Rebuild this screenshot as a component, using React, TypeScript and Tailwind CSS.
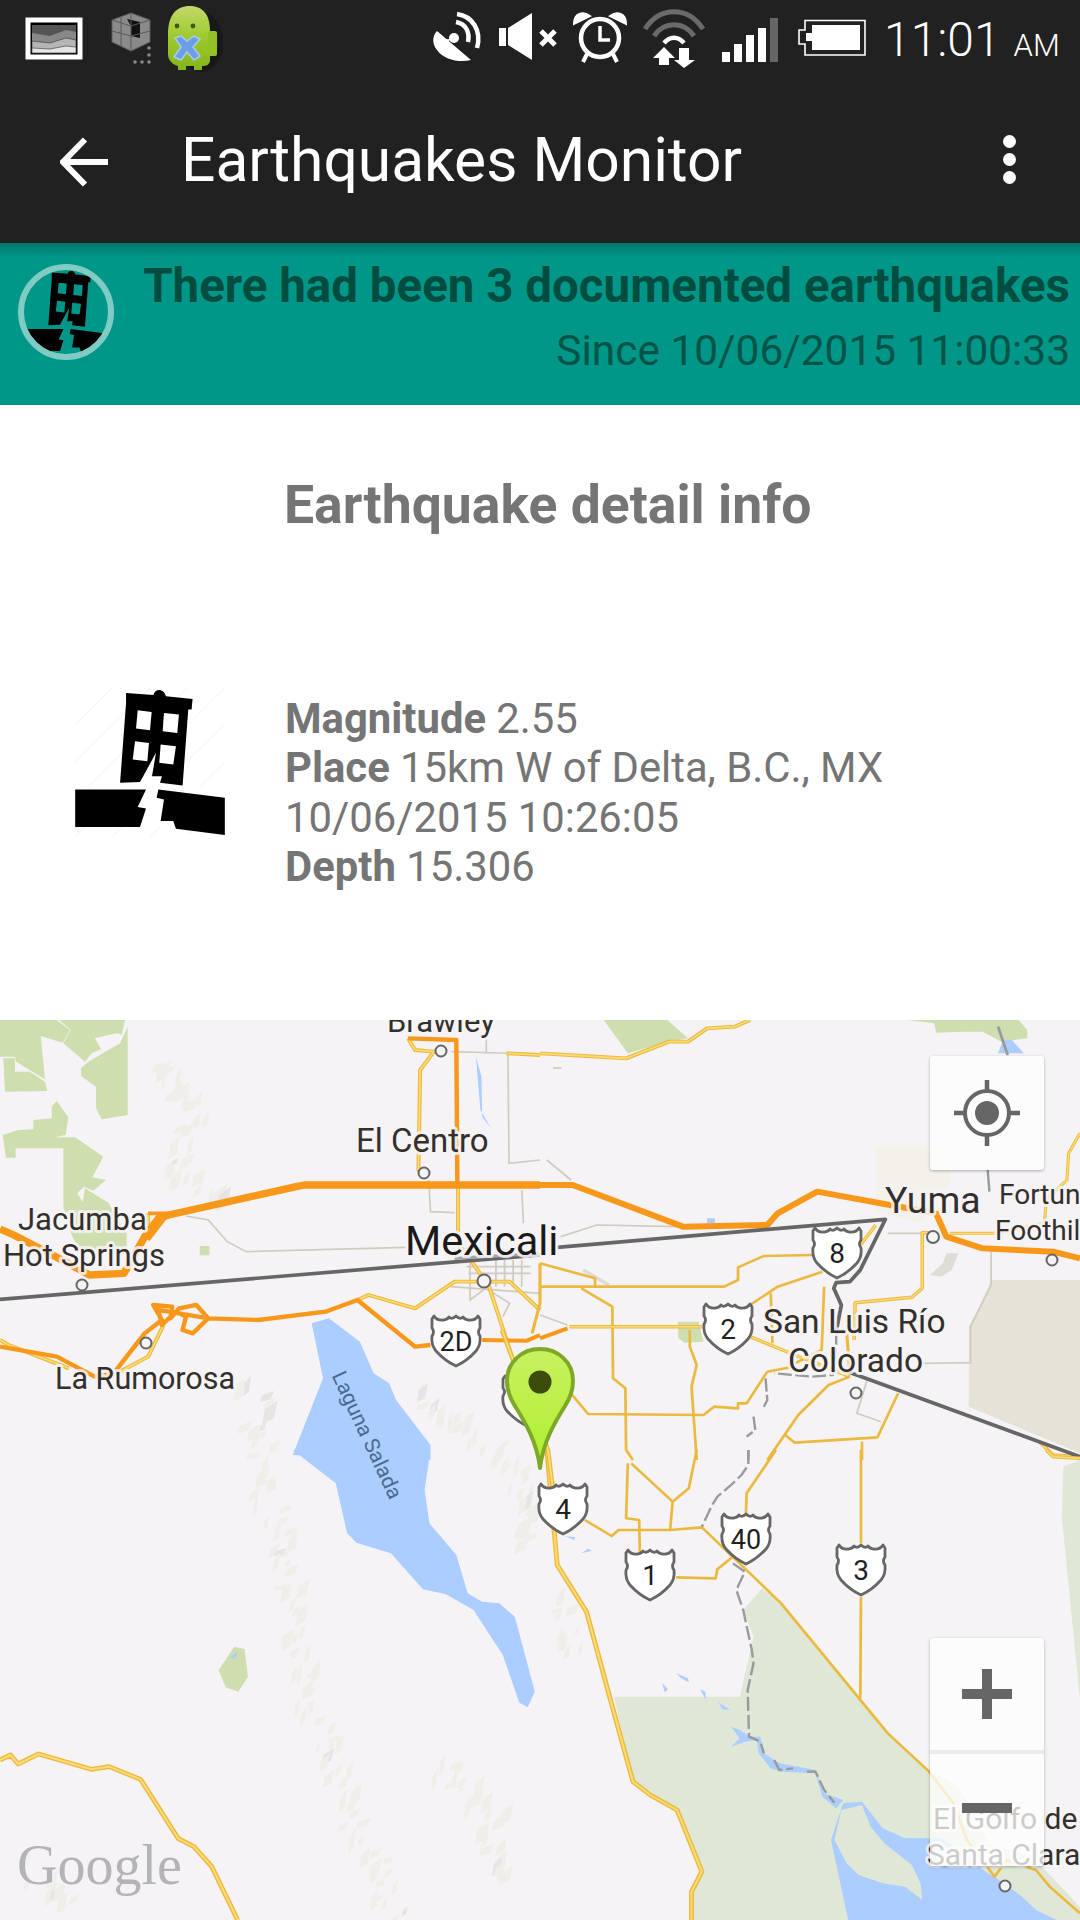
import React from "react";

const Z4 = "translate(0 1010) scale(0.34439 0.33333)";
const Z5 = "translate(540 1010) scale(0.34439 0.33333)";
const Z6 = "translate(0 1450) scale(0.34439 0.33333)";
const Z7 = "translate(540 1450) scale(0.34439 0.33333)";

const BG = "#f6f3f7";
const GREEN = "#cfdeae";
const PALE = "#dfe7d6";
const WATER = "#abcdff";
const Y_OUT = "#ecb93f";
const Y_IN = "#fbdc74";
const ORANGE = "#f8981a";
const BORDER = "#666666";
const BEIGE = "#cfccbf";

function shards() {
  const ridges: number[][][] = [
    [[248, 1377], [262, 1483], [293, 1600], [310, 1717], [344, 1800], [379, 1883], [395, 1920]],
    [[434, 1760], [489, 1817], [489, 1883]],
    [[413, 1393], [516, 1460], [523, 1550]],
    [[556, 1600], [570, 1660]],
    [[150, 1060], [190, 1110], [170, 1180], [230, 1200]],
    [[30, 1870], [60, 1910]],
  ];
  let s = 12345;
  const r = () => {
    s = (s * 16807) % 2147483647;
    return s / 2147483647;
  };
  const out: { d: string; f: string }[] = [];
  ridges.forEach((pts) => {
    for (let i = 0; i < pts.length - 1; i++) {
      const [a, b] = pts[i];
      const [c, d] = pts[i + 1];
      const n = Math.ceil(Math.hypot(c - a, d - b) / 6);
      for (let k = 0; k < n; k++) {
        const t = k / n;
        const x = a + (c - a) * t + (r() - 0.5) * 30;
        const y = b + (d - b) * t + (r() - 0.5) * 18;
        const w = 4 + r() * 9;
        const h = 5 + r() * 14;
        const f = r() > 0.93 ? "#e6e5e3" : "#f0eee9";
        out.push({
          d: `M${x.toFixed(1)} ${y.toFixed(1)}l${w.toFixed(1)} ${(-h * 0.5).toFixed(1)}l${(-w * 0.3).toFixed(1)} ${h.toFixed(1)}l${(-w * 0.9).toFixed(1)} ${(h * 0.3).toFixed(1)}z`,
          f,
        });
      }
    }
  });
  return out;
}

function Road({ p, w = 4.5, inner = false }: { p: string; w?: number; inner?: boolean }) {
  const sw = w * 1.3;
  return (
    <>
      <polyline points={p} fill="none" stroke={Y_OUT} strokeWidth={sw} strokeLinejoin="round" />
      {inner && <polyline points={p} fill="none" stroke={Y_IN} strokeWidth={sw * 0.42} strokeLinejoin="round" />}
    </>
  );
}

function Shield({ x, y, t }: { x: number; y: number; t?: string }) {
  return (
    <g transform={`translate(${x} ${y})`}>
      <path
        d="M-22 1Q-19 6-12 5Q-8 4-7 2Q-4 5 0 1Q4 5 7 2Q8 4 12 5Q19 6 22 1L24 4L24 13Q21 17 24 21Q25 30 20 36Q11 46 0 51Q-11 46-20 36Q-25 30-24 21Q-21 17-24 13L-24 4Z"
        fill="#ffffff"
        stroke="#666666"
        strokeWidth="2.8"
        strokeLinejoin="round"
      />
      {t && (
        <text x="0" y="36" textAnchor="middle" fontSize={t.length > 1 ? 27 : 28} fill="#1f1f1f">
          {t}
        </text>
      )}
    </g>
  );
}

function Label({ x, y, s = 30, t, c = "#33302b" }: { x: number; y: number; s?: number; t: string; c?: string }) {
  return (
    <text x={x} y={y} fontSize={s} fill={c} stroke={BG} strokeOpacity="0.85" strokeWidth="6" strokeLinejoin="round" paintOrder="stroke">
      {t}
    </text>
  );
}

function Dot({ x, y, r = 5.5 }: { x: number; y: number; r?: number }) {
  return <circle cx={x} cy={y} r={r} fill="#f4f4f4" stroke="#666666" strokeWidth="2" />;
}

function Quake({ fill = "#000000" }: { fill?: string }) {
  return (
    <g fill={fill}>
      <path
        fillRule="evenodd"
        d="M258 100L340 106C345 85 372 85 378 110L458 118L455 150L445 150L428 378L360 370L366 350L336 350L348 280L300 368L240 370L258 130ZM293 152L335 157L330 212L288 207ZM372 160L417 165L412 220L368 215ZM285 245L327 250L322 305L278 300ZM362 255L408 260L400 315L358 310Z"
      />
      <path d="M105 390L318 390L293 443L318 447L300 503L105 503Z" />
      <path d="M355 390L555 415L555 527L408 508L400 485L362 485L372 420L350 415Z" />
    </g>
  );
}

function MapArt() {
  return (
    <svg viewBox="0 1020 1080 900" className="block w-[1080px] h-[900px]" style={{ fontFamily: "Roboto, sans-serif" }}>
      <rect x="0" y="1020" width="1080" height="900" fill={BG} />
      <g transform="translate(0 1020) scale(0.33333)" fill={GREEN}>
        <polygon points="0,0 170,0 210,30 188,68 122,48 135,178 48,125 45,110 0,110" />
        <polygon points="10,115 45,115 45,155 90,155 135,185 142,213 15,215" />
        <polygon points="178,0 375,0 365,45 355,40 340,42 285,55 303,88 275,100 255,125 190,70 212,30" />
        <polygon points="383,20 383,285 305,298 288,265 288,200 243,168 243,145 265,125 360,70" />
        <polygon points="170,243 205,292 197,345 165,352 225,352 310,410 277,472 318,480 280,512 252,500 232,520 248,545 255,505 325,548 380,640 380,680 240,700 213,640 190,560 190,385 47,385 47,413 18,413 8,345 55,330 100,328 100,300 155,295 155,260" />
      </g>
      <g transform={Z4} fill={GREEN}>
        <rect x="580" y="708" width="28" height="28" />
      </g>
      <g transform={Z5}>
        <polygon points="185,30 370,30 430,85 370,95 255,130" fill={GREEN} />
        <polygon points="1065,30 1390,30 1415,60 1415,85 1340,95 1285,65 1230,65 1150,68 1145,40" fill={GREEN} />
        <polygon points="400,935 460,935 475,995 420,998 402,985" fill={GREEN} />
        <polygon points="975,410 1190,410 1190,520 1100,640 975,600" fill="#f3f1ea" />
        <polygon points="1310,810 1568,810 1568,1330 1245,1190 1245,950 1280,880" fill="#e5e3d7" />
        <polygon points="1215,730 1195,780 1165,800 1132,795 1170,760 1180,730" fill="#deddd6" />
        <polygon points="485,625 508,625 508,640 485,640" fill={WATER} />
        <polygon points="1330,130 1345,90 1370,90 1405,130" fill={WATER} />
      </g>
      <g transform={Z7}>
        <polygon points="1520,50 1568,30 1568,750 1515,200" fill={PALE} />
        <polygon
          points="215,740 580,740 620,560 590,480 645,415 700,460 1010,850 1130,960 1200,1000 1250,1060 1300,1180 1430,1220 1568,1370 1568,1410 440,1410 440,1325 475,1265 398,1080 270,995"
          fill={PALE}
        />
        <polygon points="845,1170 880,1060 935,1055 995,1135 1060,1165 1165,1165 1300,1270 1320,1280 1400,1340 1440,1380 1500,1410 895,1410" fill={WATER} />
        <polygon points="875,1080 855,1170 890,1240 925,1275 995,1300 1060,1310 1110,1350 1105,1300 1080,1245 1000,1180 960,1130 935,1065" fill={PALE} />
        <polygon points="555,830 580,840 610,860 640,860 650,910 695,940 800,960 825,1030 880,1050 860,1075 820,1040 800,970 700,965 670,955 635,910 630,870 595,875 555,890 580,865" fill={WATER} />
        <polygon points="395,670 430,685 432,697 410,685" fill={WATER} />
        <polygon points="355,700 372,718 362,727" fill={WATER} />
        <polygon points="465,718 480,725 482,750" fill={WATER} />
        <polygon points="518,757 552,780 530,778" fill={WATER} />
        <polygon points="72,258 102,262 100,270" fill={WATER} />
        <polygon points="120,310 140,296 150,302" fill={WATER} />
      </g>
      {shards().map((s, i) => (
        <path key={i} d={s.d} fill={s.f} />
      ))}
      <g transform={Z4} fill={WATER}>
        <polygon points="905,940 955,925 1045,995 1085,1090 1130,1120 1150,1170 1250,1305 1250,1350 850,1335 938,1105" />
        <polygon points="1382,140 1398,200 1400,320 1425,355 1395,300" />
      </g>
      <g transform={Z6}>
        <polygon
          points="850,0 1250,0 1233,120 1247,220 1325,315 1358,430 1400,455 1450,460 1495,500 1553,725 1532,772 1508,758 1460,615 1375,480 1295,433 1228,418 1135,310 1035,278 1008,250 975,100"
          fill={WATER}
        />
        <polygon points="680,590 710,597 720,680 692,725 655,712 635,660" fill={GREEN} />
        <polygon points="665,625 690,605 685,625" fill={WATER} />
      </g>

      <g transform={Z4} fill="none" stroke={BEIGE} strokeWidth="5">
        <path d="M540 618L605 630L660 695L715 725L1180 712" />
        <path d="M1310 125L1568 132" />
        <path d="M1412 80V130" />
        <path d="M1475 130L1478 460L1568 450" />
        <path d="M1245 510L1250 605L1320 608" />
        <path d="M1515 540L1520 640" />
        <path d="M1355 770H1540M1360 790H1540" />
        <path d="M1365 760V870L1410 835L1480 880L1460 920" />
        <path d="M1440 750V830M1465 750V830M1490 750V830M1515 750V830" />
        <path d="M1310 830L1568 850" />
      </g>
      <g transform={Z5} fill="none" stroke={BEIGE} strokeWidth="5">
        <path d="M20 450L90 510" />
        <path d="M60 680L165 645L400 650" />
        <path d="M1010 670H1120" />
        <path d="M1310 720V825L1250 950V1058L1110 1060" />
        <path d="M950 1110L920 1210L990 1235" />
        <path d="M0 915L80 945" />
        <path d="M125 780L200 825" strokeWidth="11" stroke="#dedcd4" />
        <path d="M38 174H62" />
      </g>

      <g transform={Z4}>
        <Road p="1185,85 1205,120 1260,125 1220,180 1215,480 1245,495" w={9} inner />
        <Road p="1330,525 1330,700 1370,755 1420,830 1490,1050" w={9} inner />
        <Road p="1038,870 1070,855 1205,895 1320,815 1480,815 1568,900" w={9} inner />
        <Road p="330,1095 430,1040 475,945" w={9} inner />
        <Road p="0,990 25,1005 200,1075" w={9} inner />
        <Road p="1470,130 1568,135" w={9} inner />
        <Road p="365,790 430,660 430,610" w={9} inner />
        <Road p="1568,760 1568,880 1545,970" w={7} />
        <polyline
          points="0,657 40,675 170,745 260,795 360,790 420,680 460,625 490,615 860,530 885,525 1568,525"
          fill="none"
          stroke={ORANGE}
          strokeWidth="22"
          strokeLinejoin="round"
        />
        <polyline points="430,610 490,610 430,690" fill="none" stroke={ORANGE} strokeWidth="11" />
        <polyline points="1185,85 1325,90 1328,525" fill="none" stroke={ORANGE} strokeWidth="13" strokeLinejoin="round" />
        <polyline
          points="0,1010 165,1040 275,1100 330,1090 420,970 470,930 445,885 500,890 495,925 520,895 570,885 605,925 560,970 530,960 540,920 510,905 470,945 460,900 490,905 605,925 750,930 945,905 1038,870 1205,1010 1250,1005"
          fill="none"
          stroke={ORANGE}
          strokeWidth="13"
          strokeLinejoin="round"
        />
        <polyline points="1400,990 1530,992 1568,975" fill="none" stroke={ORANGE} strokeWidth="12" />
        <polyline points="0,868 1568,735" fill="none" stroke={BORDER} strokeWidth="11" />
      </g>
      <g transform={Z5}>
        <Road p="0,130 250,145 375,95 430,95 485,55 565,50 610,30" w={9} inner />
        <Road p="0,760 160,805 160,830" w={6} />
        <Road p="0,830 535,830 575,810 575,772 650,738 790,735" w={6} />
        <Road p="120,835 210,890 212,1105 248,1135 250,1320 270,1350" w={6} />
        <Road p="85,950 470,950" w={8} inner />
        <Road p="610,885 690,830 820,785" w={6} />
        <Road p="670,850 675,1000" w={6} />
        <Road p="825,830 818,1020 740,1060" w={6} />
        <Road p="610,980 740,1035 900,1100" w={8} inner />
        <Road p="660,1085 600,1180 575,1180 575,1195 505,1190 475,1215 140,1212 85,1145" w={6} />
        <Road p="435,960 435,1010 455,1065 440,1130 455,1350" w={6} />
        <Road p="660,1085 735,1070" w={6} />
        <Road p="900,1100 838,1125 750,1215 660,1350" w={6} />
        <Road p="712,1275 740,1298 980,1282 1040,1150" w={6} />
        <Road p="935,1295 935,1350" w={6} />
        <Road p="912,990 915,878 1080,862 1110,835 1110,668 1130,668" w={8} inner />
        <Road p="890,960 900,1090" w={7} />
        <Road p="930,705 975,645" w={8} inner />
        <Road p="1190,670 1320,670 1465,640 1470,570 1530,510 1535,430 1568,370" w={7} inner />
        <Road p="1450,1295 1490,1335 1568,1340" w={8} inner />
        <polyline
          points="0,525 95,525 415,650 660,645 690,610 805,545 1000,582 1150,610 1180,680 1285,715 1490,725 1568,745"
          fill="none"
          stroke={ORANGE}
          strokeWidth="18"
          strokeLinejoin="round"
        />
        <polyline points="0,985 80,955" fill="none" stroke={ORANGE} strokeWidth="12" />
        <polyline points="1330,50 1358,135" fill="none" stroke="#999a9c" strokeWidth="8" />
        <polyline points="1300,480 1305,545" fill="none" stroke="#999a9c" strokeWidth="7" />
        <polyline points="50,712 1003,628 930,780 900,815 860,818 853,835 875,885 860,965 885,965" fill="none" stroke={BORDER} strokeWidth="11" strokeLinejoin="round" />
        <polyline points="880,1080 1568,1340" fill="none" stroke={BORDER} strokeWidth="11" />
        <path
          d="M860 965V1010L850 1095L790 1100L680 1090M655 1105L660 1170L650 1190M620 1220L625 1260L600 1280M605 1320V1350"
          fill="none"
          stroke="#999a9c"
          strokeWidth="7"
          strokeDasharray="40 10"
        />
      </g>
      <g transform={Z6}>
        <Road p="0,930 30,915 53,942 112,912 265,958 317,950 408,988 517,1165 563,1190 615,1250 690,1410" w={11} inner />
      </g>
      <g transform={Z7}>
        <Road p="20,0 50,345 135,485 210,770 270,995 320,1035 398,1080 470,1265 440,1325 440,1410" w={11} inner />
        <Road p="265,40 385,155 432,115 455,0" w={6} />
        <Road p="255,40 250,205 288,210 290,310" w={6} />
        <Road p="385,155 378,240" w={6} />
        <Road p="130,210 208,258 228,240 378,240 470,232 625,385 700,460 1010,850 1130,965 1200,1060 1240,1170 1320,1280 1355,1230 1440,1260 1480,1310 1568,1390" w={6} />
        <Road p="685,0 600,130 598,190" w={6} />
        <Road p="395,382 510,385 515,358 560,320" w={6} />
        <Road p="932,0 932,280" w={6} />
        <Road p="932,440 930,745" w={6} />
        <Road p="1470,0 1490,20 1568,25" w={8} inner />
        <path
          d="M605 0V45L585 75L555 105L515 140L500 165L470 230M560 340L595 365L570 420L590 480L615 600L620 640L603 720L607 860L640 875L650 910M680 930L695 960L735 955M775 965H800L825 1020L855 1058"
          fill="none"
          stroke="#999a9c"
          strokeWidth="7"
          strokeDasharray="42 12"
        />
      </g>
      <g transform={Z4}>
        <polyline points="1320,745 1565,730" fill="none" stroke="#a5a5a5" strokeWidth="10" />
      </g>
      <Road p="502,1330 513,1360 548,1450 553,1490" w={3.5} inner />

      <Shield x={837} y={1227} t="8" />
      <Shield x={728} y={1303} t="2" />
      <Shield x={456} y={1315} t="2D" />
      <Shield x={527} y={1375} />
      <Shield x={563} y={1483} t="4" />
      <Shield x={746} y={1513} t="40" />
      <Shield x={650} y={1549} t="1" />
      <Shield x={861} y={1544} t="3" />

      <Dot x={441} y={1051} />
      <Dot x={424} y={1173} />
      <Dot x={82} y={1285} />
      <Dot x={146} y={1343} />
      <Dot x={484} y={1281} r={6.5} />
      <Dot x={933} y={1237} r={6} />
      <Dot x={1052} y={1260} />
      <Dot x={856} y={1393} />
      <Dot x={1005} y={1886} />

      <Label x={387} y={1032} s={31} t="Brawley" />
      <Label x={356} y={1152} s={33} t="El Centro" />
      <Label x={18} y={1230} s={31} t="Jacumba" />
      <Label x={3} y={1266} s={31} t="Hot Springs" />
      <Label x={405} y={1255} s={41.5} t="Mexicali" c="#1c1a18" />
      <Label x={55} y={1389} s={30.5} t="La Rumorosa" />
      <Label x={885} y={1213} s={37.5} t="Yuma" />
      <Label x={999} y={1204} s={28} t="Fortuna" />
      <Label x={995} y={1240} s={28} t="Foothills" />
      <Label x={763} y={1333} s={33.5} t="San Luis Río" />
      <Label x={788} y={1372} s={33.5} t="Colorado" />
      <Label x={933} y={1829} s={30} t="El Golfo de" />
      <Label x={927} y={1865} s={30} t="Santa Clara" />
      <g transform="translate(367 1435) rotate(65)">
        <text x="0" y="7" textAnchor="middle" fontSize="21" fill="#4a6a92" stroke={WATER} strokeOpacity="0.9" strokeWidth="4" paintOrder="stroke">
          Laguna Salada
        </text>
      </g>
      <text x="17" y="1884" fontSize="56" fontFamily="'Liberation Serif', serif" fill="#b4b3b5" stroke={BG} strokeWidth="3" paintOrder="stroke">
        Google
      </text>

      <defs>
        <linearGradient id="pin" x1="0" y1="0" x2="0" y2="1">
          <stop offset="0" stopColor="#c9f060" />
          <stop offset="1" stopColor="#aef02e" />
        </linearGradient>
      </defs>
      <path
        d="M540 1468C537 1442 525 1422 515 1406C508 1395 507 1388 507 1381C507 1362 522 1349 540 1349C558 1349 573 1362 573 1381C573 1388 572 1395 565 1406C555 1422 543 1442 540 1468Z"
        fill="url(#pin)"
        stroke="#7fa828"
        strokeWidth="4"
        strokeLinejoin="round"
      />
      <circle cx="540" cy="1382" r="11.5" fill="#3b4c0c" />
    </svg>
  );
}

function StatusIcons() {
  return (
    <svg viewBox="0 0 1080 75" className="block w-[1080px] h-[75px]">
      <rect x="28" y="20" width="52" height="37" fill="#000" stroke="#fff" strokeWidth="5" />
      <rect x="32" y="25" width="44" height="28" fill="#555" />
      <path d="M32 33L50 36L66 30L76 32V53H32Z" fill="#888" />
      <path d="M32 41L50 43L66 38L76 40V53H32Z" fill="#b5b5b5" stroke="#333" strokeWidth="0.6" />
      <path d="M32 48L50 49L66 46L76 47V53H32Z" fill="#e4e4e4" stroke="#333" strokeWidth="0.6" />

      <path d="M112 20L131 13L150 20V42L131 51L112 42Z" fill="#8a8a8a" stroke="#5c5c5c" />
      <path d="M127 19L140 22L140 38L131 36L131 26Z" fill="#111" />
      <path d="M112 31L131 36L150 31M131 14V51M121 16V46M112 20L131 26L150 20" fill="none" stroke="#5a5a5a" />
      <g fill="#8a8a8a">
        <circle cx="149" cy="48" r="1.8" />
        <circle cx="149" cy="55" r="1.8" />
        <circle cx="149" cy="62" r="1.8" />
        <circle cx="142" cy="62" r="1.8" />
        <circle cx="135" cy="62" r="1.8" />
      </g>

      <defs>
        <linearGradient id="droid" x1="0" y1="0" x2="0" y2="1">
          <stop offset="0" stopColor="#c4d86a" />
          <stop offset="0.5" stopColor="#9dc92c" />
          <stop offset="1" stopColor="#83b61d" />
        </linearGradient>
      </defs>
      <ellipse cx="196" cy="39" rx="22" ry="30" fill="#000" opacity="0.25" transform="translate(5 3)" />
      <path d="M168 35C168 15 176 6 190 6C203 6 210 15 210 30V60C210 65 206 66 202 66V70H194V66H186V70H178V66C172 64 168 60 168 54Z" fill="url(#droid)" />
      <rect x="208" y="31" width="9" height="25" rx="2" fill="#93c224" />
      <circle cx="177" cy="26" r="2.4" fill="#3c5a10" />
      <circle cx="193" cy="26" r="2.4" fill="#3c5a10" />
      <path d="M175 38L181 36L187 41L194 36L200 39L193 47L200 56L194 60L187 52L181 60L174 57L181 47Z" fill="#6d9fe8" stroke="#a9cbf2" strokeWidth="1.5" />

      <g fill="#fff">
        <path d="M437 31L471 60C460 63 444 60 437 50C432 44 432 36 437 31Z" />
        <path d="M445 33L458 33L452 42Z" fill="#212121" />
        <circle cx="454" cy="38" r="5" />
        <path d="M450 39L437 40L446 50Z" />
      </g>
      <g fill="none" stroke="#fff" strokeWidth="4.5">
        <path d="M456 22C466 24 470 32 468 42" />
        <path d="M457 14C472 16 482 30 477 48" />
      </g>

      <g fill="#fff">
        <rect x="499" y="28" width="7" height="18" />
        <path d="M508 28L532 13V60L508 45Z" />
      </g>
      <path d="M541 31L555 45M555 31L541 45" stroke="#fff" strokeWidth="5" />

      <circle cx="600" cy="38" r="19" fill="none" stroke="#fff" strokeWidth="4.5" />
      <path d="M600 26V40H610" fill="none" stroke="#fff" strokeWidth="3.5" />
      <path d="M574 24C574 13 583 11 590 16ZM626 24C626 13 617 11 610 16Z" fill="#fff" stroke="#fff" strokeWidth="2" />
      <path d="M587 54L583 62M613 54L617 62" stroke="#fff" strokeWidth="4" />

      <g fill="none">
        <path d="M645 29C660 6 688 6 703 29" stroke="#6a6a6a" strokeWidth="5" />
        <path d="M654 36C664 21 684 21 694 36" stroke="#6a6a6a" strokeWidth="5" />
        <path d="M664 43C670 36 678 36 684 43" stroke="#fff" strokeWidth="4.5" />
      </g>
      <g fill="#fff">
        <path d="M664 47L675 58H669V65H659V58H653Z" />
        <path d="M679 48H689V60H695L684 68L674 60H679Z" />
      </g>

      <g>
        <rect x="722" y="52" width="8" height="10" fill="#fff" />
        <rect x="734" y="44" width="8" height="18" fill="#fff" />
        <rect x="746" y="35" width="8" height="27" fill="#fff" />
        <rect x="758" y="28" width="8" height="34" fill="#fff" />
        <rect x="770" y="18" width="8" height="44" fill="#666" />
      </g>

      <path d="M805 20.5H865V55H805V44H799V30H805Z" fill="none" stroke="#fff" strokeWidth="1.6" />
      <path d="M812 25H860V50H812V41H806V33H812Z" fill="#fff" />
    </svg>
  );
}

export default function App() {
  return (
    <div className="w-[1080px] h-[1920px] overflow-hidden bg-white [font-family:Roboto,sans-serif]">
      <header className="relative h-[243px] bg-[#212121] text-white">
        <StatusIcons />
        <div className="absolute left-[884px] top-[8px] flex items-baseline">
          <span className="text-[48px] leading-[64px] font-light">11:01</span>
          <span className="ml-[13px] text-[31px] leading-[64px] font-light">AM</span>
        </div>
        <div className="flex items-center h-[168px] pl-[60px] pr-[64px]">
          <svg viewBox="0 0 48 50" className="mt-[5px] w-[48px] h-[50px] shrink-0">
            <path d="M48 25H4M25 2.5L3 25L25 47.5" fill="none" stroke="#fff" strokeWidth="6" />
          </svg>
          <h1 className="ml-[73px] mt-[3px] flex-1 text-[60.5px] leading-[70px] font-normal">Earthquakes Monitor</h1>
          <div className="flex flex-col gap-[5px]">
            <span className="block w-[13px] h-[13px] rounded-full bg-white" />
            <span className="block w-[13px] h-[13px] rounded-full bg-white" />
            <span className="block w-[13px] h-[13px] rounded-full bg-white" />
          </div>
        </div>
      </header>

      <section className="flex h-[162px] bg-gradient-to-b from-[#00776b] via-[#009688] via-[9%] to-[#009688]">
        <svg viewBox="0 0 96 96" className="ml-[18px] mt-[21px] w-[96px] h-[96px] shrink-0">
          <defs>
            <clipPath id="ring">
              <circle cx="48" cy="48" r="45" />
            </clipPath>
          </defs>
          <g clipPath="url(#ring)">
            <g transform="translate(-16.5 -11) scale(0.195)">
              <Quake />
            </g>
          </g>
          <circle cx="48" cy="48" r="45" fill="none" stroke="#80cbc4" strokeWidth="6" />
        </svg>
        <div className="flex-1 min-w-0 pr-[10px] text-right text-[#004d40]">
          <p className="mt-[17px] whitespace-nowrap text-[47.5px] leading-[52px] font-bold">There had been 3 documented earthquakes</p>
          <p className="mt-[15px] whitespace-nowrap text-[42.4px] leading-[48px] opacity-90">Since 10/06/2015 11:00:33</p>
        </div>
      </section>

      <section className="h-[615px] text-[#757575]">
        <h2 className="ml-[284px] pt-[70px] text-[53.5px] leading-[60px] font-bold">Earthquake detail info</h2>
        <div className="flex mt-[159px]">
          <svg viewBox="105 85 450 445" className="ml-[75px] mt-[-6px] w-[150px] h-[148px] shrink-0">
            <g stroke="#e4e4e4" strokeWidth="1.5" fill="none">
              <path d="M105 195L215 85M105 307L330 85M140 385L440 85M445 195L555 85M440 305L555 195M480 380L555 307M105 530L135 503M218 530L245 503M330 530L360 503M445 525L470 510" />
            </g>
            <Quake />
          </svg>
          <div className="ml-[60px] text-[41.8px] leading-[49.3px]">
            <p>
              <b className="font-bold">Magnitude</b> 2.55
            </p>
            <p>
              <b className="font-bold">Place</b> 15km W of Delta, B.C., MX
            </p>
            <p>10/06/2015 10:26:05</p>
            <p>
              <b className="font-bold">Depth</b> 15.306
            </p>
          </div>
        </div>
      </section>

      <section className="relative h-[900px] overflow-hidden">
        <MapArt />
        <button className="absolute left-[930px] top-[36px] flex items-center justify-center w-[114px] h-[114px] rounded-[3px] bg-white/75 shadow-[0_1px_3px_rgba(0,0,0,0.3)]">
          <svg viewBox="0 0 66 66" className="w-[66px] h-[66px]">
            <circle cx="33" cy="33" r="22" fill="none" stroke="#666" strokeWidth="4" />
            <circle cx="33" cy="33" r="12" fill="#666" />
            <path d="M33 0V11M33 55V66M0 33H11M55 33H66" stroke="#666" strokeWidth="4.5" />
          </svg>
        </button>
        <div className="absolute left-[930px] top-[618px] w-[114px] h-[228px] flex flex-col rounded-[3px] bg-white/75 shadow-[0_1px_3px_rgba(0,0,0,0.3)]">
          <button className="flex-1 flex items-center justify-center border-b-[4px] border-[#e6e6e6]/80">
            <svg viewBox="0 0 50 50" className="w-[50px] h-[50px]">
              <path d="M20 0H30V20H50V30H30V50H20V30H0V20H20Z" fill="#666" />
            </svg>
          </button>
          <button className="flex-1 flex items-center justify-center">
            <svg viewBox="0 0 50 10" className="w-[50px] h-[10px] -mt-[4px]">
              <rect width="50" height="10" fill="#666" />
            </svg>
          </button>
        </div>
      </section>
    </div>
  );
}
